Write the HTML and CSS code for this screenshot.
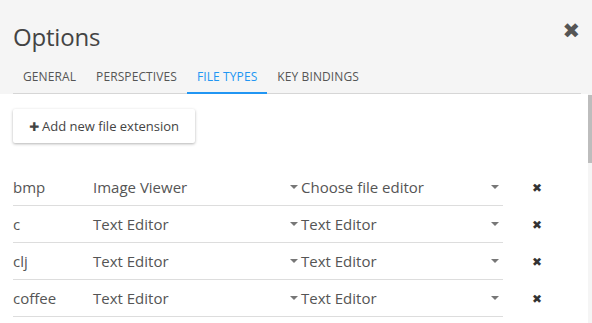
FILE: index.html
```html
<!DOCTYPE html>
<html lang="en">
<head>
    <meta charset="UTF-8">
    <meta name="viewport" content="width=device-width, initial-scale=1.0">
    <title>Options</title>
    <link rel="stylesheet" href="styles.css">
</head>
<body>
    <div class="dialog">
        <div class="dialog-header">
            <h1>Options</h1>
            <span class="close">&#x2716;</span>
            <div class="tabs">
                <div class="tab">General</div>
                <div class="tab">Perspectives</div>
                <div class="tab active">File types</div>
                <div class="tab">Key bindings</div>
            </div>
        </div>

        <div class="dialog-body">
            <div class="dialog-content">
                <button class="add-btn"><span class="plus">&#x271A;</span>Add new file extension</button>

                <div class="file-types" id="file-types"></div>
            </div>
            <div class="scrollbar"><div class="scrollbar-thumb"></div></div>
        </div>
    </div>

    <script>
        const fileTypes = [
            ['bmp', 'Image Viewer', 'Choose file editor'],
            ['c', 'Text Editor', 'Text Editor'],
            ['clj', 'Text Editor', 'Text Editor'],
            ['coffee', 'Text Editor', 'Text Editor']
        ];

        document.getElementById('file-types').innerHTML = fileTypes.map(ft => `
            <div class="ft-row">
                <div class="ft-main">
                    <span class="ft-ext">${ft[0]}</span>
                    <span class="ft-viewer">${ft[1]}</span>
                    <span class="ft-select">
                        <span class="caret"></span>
                        <span class="ft-select-text">${ft[2]}</span>
                        <span class="caret"></span>
                    </span>
                </div>
                <span class="ft-delete">&#x2716;</span>
            </div>
        `).join('');
    </script>
</body>
</html>
```

FILE: styles.css
```css
html, body {
    margin: 0;
    height: 100%;
}
body {
    font-family: 'Open Sans', 'DejaVu Sans', sans-serif;
    color: #555;
    background: #fff;
    overflow: hidden;
}
.dialog {
    display: flex;
    flex-direction: column;
    height: 323px;
}
.dialog-header {
    position: relative;
    background: #f5f5f5;
    padding: 0 11px 0 13px;
    flex: none;
}
h1 {
    margin: 0;
    padding: 21px 0 7px 0;
    font-size: 24px;
    font-weight: 400;
    line-height: 32px;
    color: #444;
    letter-spacing: -0.2px;
}
.close {
    position: absolute;
    top: 16px;
    right: 12px;
    font-size: 21px;
    color: #555;
}
.tabs {
    display: flex;
    border-bottom: 1px solid #d6d6d6;
}
.tab {
    padding: 7px 10px 5px 10px;
    font-size: 12px;
    line-height: 20px;
    text-transform: uppercase;
    letter-spacing: 0.1px;
    color: #555;
    border-bottom: 2px solid transparent;
    margin-bottom: -1px;
}
.tab.active {
    color: #2196f3;
    border-bottom-color: #2196f3;
}
.dialog-body {
    position: relative;
    flex: 1;
    min-height: 0;
}
.dialog-content {
    height: 100%;
    box-sizing: border-box;
    overflow: hidden;
    padding: 15px 0 0 13px;
}
/* scroll track drawn over the right edge */
.scrollbar {
    position: absolute;
    top: 0;
    right: 0;
    bottom: 0;
    width: 4px;
    background: #f5f5f5;
}
.scrollbar-thumb {
    margin-top: 1px;
    height: 68px;
    background: #bdbdbd;
}
.add-btn {
    font-family: inherit;
    font-size: 13px;
    color: #444;
    background: #fff;
    border: none;
    height: 34px;
    width: 182px;
    padding: 0;
    box-shadow: 0 1px 3px rgba(0,0,0,0.3);
    border-radius: 2px;
}
.plus {
    font-size: 12px;
    margin-right: 3px;
}
.file-types {
    margin-top: 26px;
}
.ft-row {
    display: flex;
    align-items: stretch;
}
.ft-main {
    display: flex;
    align-items: center;
    width: 490px;
    height: 36px;
    border-bottom: 1px solid #ddd;
    font-size: 15px;
}
.ft-ext {
    width: 80px;
}
.ft-viewer {
    width: 197px;
}
.ft-select {
    flex: 1;
    display: flex;
    align-items: center;
    padding-right: 4px;
}
.ft-select-text {
    flex: 1;
    margin-left: 3px;
}
.caret {
    width: 0;
    height: 0;
    border-left: 4px solid transparent;
    border-right: 4px solid transparent;
    border-top: 4px solid #777;
}
.ft-delete {
    display: flex;
    align-items: center;
    padding-left: 29px;
    font-size: 12px;
    color: #333;
}
```
